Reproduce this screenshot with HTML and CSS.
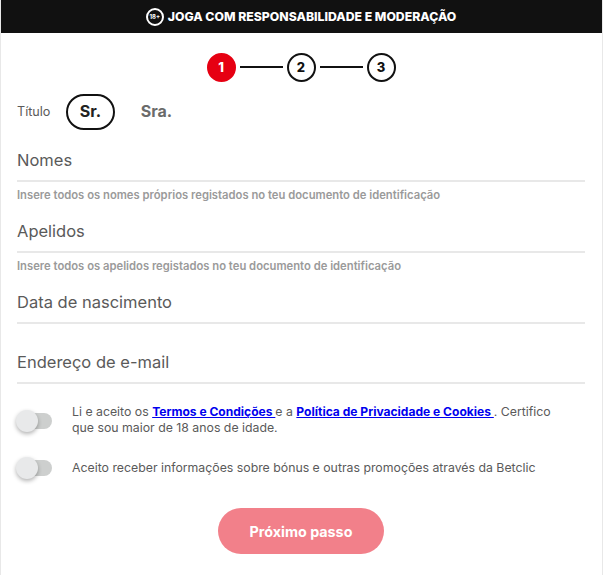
FILE: index.html
```html
<!DOCTYPE html>
<html lang="pt">

<head>
  <meta charset="UTF-8">
  <meta name="viewport" content="width=device-width, initial-scale=1.0">
  <title>Registo</title>
  <link rel="stylesheet" href="styles.css">
</head>

<body>
  <div class="banner">
    <span class="age-badge">18+</span>
    <span>JOGA COM RESPONSABILIDADE E MODERAÇÃO</span>
  </div>

  <form class="form">
    <div class="stepper">
      <span class="step step-active">1</span>
      <span class="step-line"></span>
      <span class="step">2</span>
      <span class="step-line"></span>
      <span class="step">3</span>
    </div>

    <div class="title-row">
      <span class="title-label">Título</span>
      <span class="pill pill-selected">Sr.</span>
      <span class="pill">Sra.</span>
    </div>

    <div class="field field-names">
      <div class="field-label">Nomes</div>
      <div class="field-hint">Insere todos os nomes próprios registados no teu documento de identificação</div>
    </div>
    <div class="field field-surnames">
      <div class="field-label">Apelidos</div>
      <div class="field-hint">Insere todos os apelidos registados no teu documento de identificação</div>
    </div>
    <div class="field field-birth">
      <div class="field-label">Data de nascimento</div>
    </div>
    <div class="field field-email">
      <div class="field-label">Endereço de e-mail</div>
    </div>

    <div class="consent consent-terms">
      <span class="toggle"></span>
      <p>Li e aceito os <a href="#">Termos e Condições </a> e a <a href="#">Política de Privacidade e Cookies </a>. Certifico que sou maior de 18 anos de idade.</p>
    </div>
    <div class="consent consent-promo">
      <span class="toggle"></span>
      <p>Aceito receber informações sobre bónus e outras promoções através da Betclic</p>
    </div>

    <div class="actions">
      <button type="button" class="next-btn">Próximo passo</button>
    </div>
  </form>
</body>

</html>
```

FILE: styles.css
```css
* {
  box-sizing: border-box;
}

html {
  background: #fff;
}

body {
  margin: 0;
  height: 575px;
  overflow: hidden;
  font-family: Inter, "Liberation Sans", sans-serif;
  color: #5a5a5a;
  border-left: 1px solid #e8e8e8;
  border-right: 1px solid #e8e8e8;
}

.banner {
  height: 33px;
  background: #111;
  color: #fff;
  display: flex;
  align-items: center;
  justify-content: center;
  gap: 4px;
  font-size: 12.25px;
  font-weight: 800;
  padding-right: 1px;
}

.age-badge {
  width: 18px;
  height: 18px;
  border: 2px solid #fff;
  border-radius: 50%;
  display: flex;
  align-items: center;
  justify-content: center;
  font-size: 6px;
  font-weight: 700;
}

.form {
  padding: 19px 17px 0 16px;
}

.stepper {
  display: flex;
  align-items: center;
  justify-content: center;
  gap: 4px;
  height: 30px;
}

.step {
  width: 29px;
  height: 29px;
  border: 2px solid #111;
  border-radius: 50%;
  display: flex;
  align-items: center;
  justify-content: center;
  font-size: 13px;
  font-weight: 800;
  color: #111;
}

.step-active {
  background: #e60012;
  border-color: #e60012;
  color: #fff;
}

.step-line {
  width: 43px;
  height: 2px;
  background: #111;
}

.title-row {
  display: flex;
  align-items: center;
  height: 36px;
  margin-top: 12px;
}

.title-label {
  font-size: 12.6px;
  width: 49px;
  padding-bottom: 1px;
}

.pill {
  height: 36px;
  width: 49px;
  display: flex;
  align-items: center;
  justify-content: center;
  font-size: 16px;
  font-weight: 700;
  color: #6b6b6b;
  border-radius: 18px;
  padding-bottom: 2px;
}

.pill-selected {
  border: 2px solid #111;
  color: #222;
  margin-right: 17px;
}

.field-label {
  font-size: 16.5px;
  line-height: 20px;
  height: 32px;
  border-bottom: 2px solid #e8e8e8;
}

.field-hint {
  font-size: 11.25px;
  font-weight: 600;
  color: #9a9a9a;
  line-height: 14px;
  margin-top: 6px;
}

.field-names {
  margin-top: 20px;
}

.field-surnames {
  margin-top: 19px;
}

.field-birth {
  margin-top: 19px;
}

.field-email {
  margin-top: 28px;
}

.consent {
  display: flex;
  align-items: flex-start;
  gap: 20px;
}

.consent p {
  margin: 0;
  width: 490px;
  font-size: 12.3px;
  line-height: 16px;
}

.consent a {
  color: #00e;
  font-weight: 700;
  font-size: 12.05px;
}

.consent-terms {
  margin-top: 20px;
}

.consent-terms .toggle {
  margin-top: 9px;
}

.consent-promo {
  margin-top: 24px;
}

.toggle {
  position: relative;
  flex: none;
  width: 35px;
  height: 16px;
  background: #cdcfce;
  border-radius: 8px;
}

.toggle::before {
  content: "";
  position: absolute;
  left: -1px;
  top: -3px;
  width: 22px;
  height: 22px;
  border-radius: 50%;
  background: #e8e9ea;
  box-shadow: 0 2px 4px rgba(0, 0, 0, 0.3);
}

.actions {
  display: flex;
  justify-content: center;
  margin-top: 32px;
}

.next-btn {
  width: 166px;
  height: 46px;
  border: 0;
  border-radius: 23px;
  background: #f2808a;
  color: #fff;
  font-family: inherit;
  font-size: 14.3px;
  font-weight: 700;
}
```
